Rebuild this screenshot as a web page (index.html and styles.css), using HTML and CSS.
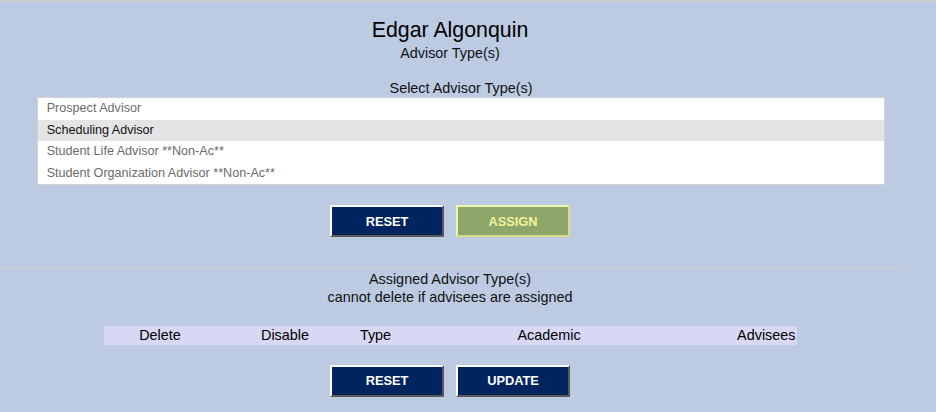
FILE: index.html
```html
<!DOCTYPE html>
<html lang="en">
<head>
<meta charset="utf-8">
<title>Advisor Type(s)</title>
<link rel="stylesheet" href="styles.css">
</head>
<body>
<div class="topline"></div>
<main class="page">
  <h1 class="title">Edgar Algonquin</h1>
  <div class="subtitle">Advisor Type(s)</div>

  <section class="select-block">
    <div class="label">Select Advisor Type(s)</div>
    <ul class="listbox">
      <li class="option">Prospect Advisor</li>
      <li class="option selected">Scheduling Advisor</li>
      <li class="option">Student Life Advisor **Non-Ac**</li>
      <li class="option">Student Organization Advisor **Non-Ac**</li>
    </ul>
  </section>

  <div class="buttons buttons-top">
    <button class="btn btn-navy">RESET</button>
    <button class="btn btn-green">ASSIGN</button>
  </div>

  <div class="divider"></div>

  <div class="line line-first">Assigned Advisor Type(s)</div>
  <div class="line">cannot delete if advisees are assigned</div>

  <div class="table-head">
    <div class="th th-delete">Delete</div>
    <div class="th th-disable">Disable</div>
    <div class="th th-type">Type</div>
    <div class="th th-academic">Academic</div>
    <div class="th th-advisees">Advisees</div>
  </div>

  <div class="buttons buttons-bottom">
    <button class="btn btn-navy">RESET</button>
    <button class="btn btn-navy">UPDATE</button>
  </div>
</main>
</body>
</html>
```

FILE: styles.css
```css
* { box-sizing: border-box; }

html, body {
  margin: 0;
  padding: 0;
  background: #bccbe2;
  font-family: "Liberation Sans", Arial, sans-serif;
  color: #111;
}

body {
  width: 936px;
  height: 412px;
  overflow: hidden;
}

.topline {
  height: 2px;
  background: #cbcdd2;
}

.page {
  width: 900px;
  text-align: center;
}

.title {
  margin: 16px 0 0;
  font-size: 21.33px;
  font-weight: normal;
  line-height: 24.5px;
  color: #000;
}

.subtitle {
  margin-top: 1px;
  font-size: 14.4px;
  line-height: 18px;
}

.select-block {
  margin: 17px 0 0 37px;
  width: 848px;
}

.label {
  font-size: 14.4px;
  line-height: 18.5px;
}

.listbox {
  list-style: none;
  margin: 0;
  padding: 0;
  background: #fff;
  border: 1px solid #d2d2d4;
  text-align: left;
}

.option {
  height: 21.5px;
  line-height: 21.5px;
  padding-left: 8.7px;
  font-size: 12.6px;
  color: #6b6b6b;
}

.option.selected {
  background: #e4e4e4;
  color: #111;
}

.buttons {
  display: flex;
  justify-content: center;
  gap: 12px;
}

.buttons-top { margin-top: 20px; }
.buttons-bottom { margin-top: 20px; }

.btn {
  width: 114px;
  height: 32px;
  padding: 0;
  font-family: "Liberation Sans", Arial, sans-serif;
  font-size: 12.8px;
  font-weight: bold;
  cursor: pointer;
}

.btn-navy {
  background: #00245f;
  color: #fff;
  border: 2px solid;
  border-color: #ffffff #5a5a5a #5a5a5a #ffffff;
}

.btn-green {
  background: #8fa66b;
  color: #f2f39a;
  border: 2px solid;
  border-color: #eef4a8 #d6dc8c #d6dc8c #eef4a8;
}

.divider {
  width: 902px;
  height: 1px;
  margin-top: 30px;
  background: #d3d0cd;
}

.line {
  font-size: 14.4px;
  line-height: 18.4px;
}

.line-first { margin-top: 2px; }

.table-head {
  width: 693px;
  height: 19px;
  margin: 19px auto 0;
  background: #d8d8f4;
  display: grid;
  grid-template-columns: 113px 137px 44px 303px 96px;
  align-items: center;
  font-size: 14.4px;
  color: #000;
}

.th { text-align: center; line-height: 19px; }
.th-advisees { text-align: right; padding-right: 1px; }
```
